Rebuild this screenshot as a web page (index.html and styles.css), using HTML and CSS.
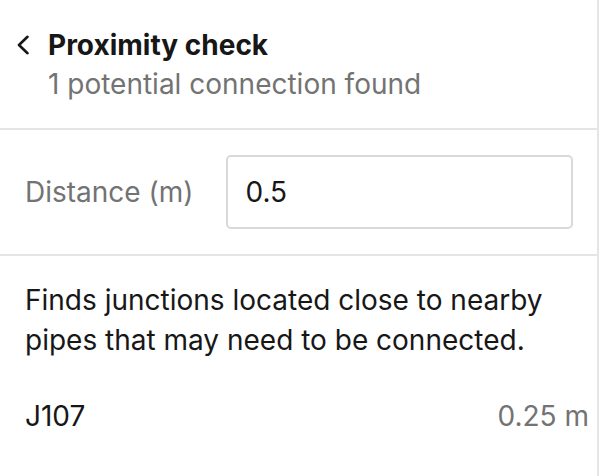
FILE: index.html
```html
<!DOCTYPE html>
<html>
<head>
<meta charset="utf-8">
<link rel="stylesheet" href="styles.css">
</head>
<body>
<div class="panel">
  <header class="header">
    <div class="title-row">
      <button class="back" aria-label="Back">
        <svg width="14" height="20" viewBox="0 0 14 20"><path d="M11.5 1.8 L3 10 L11.5 18.2" fill="none" stroke="#171717" stroke-width="2.6" stroke-linecap="round" stroke-linejoin="round"/></svg>
      </button>
      <h1 class="title">Proximity check</h1>
    </div>
    <p class="subtitle">1 potential connection found</p>
  </header>
  <section class="field-row">
    <label class="field-label" for="dist">Distance (m)</label>
    <input class="field-input" id="dist" type="text" value="0.5">
  </section>
  <section class="body">
    <p class="desc">Finds junctions located close to nearby pipes that may need to be connected.</p>
    <div class="result">
      <span class="result-id">J107</span>
      <span class="result-val">0.25 m</span>
    </div>
  </section>
</div>
</body>
</html>
```

FILE: styles.css
```css
* { box-sizing: border-box; }
html, body { margin: 0; padding: 0; background: #fff; }
body {
  font-family: Inter, "Noto Sans", sans-serif;
  font-size: 28px;
  color: #171717;
}
.panel {
  width: 599px;
  height: 476px;
  border-right: 2px solid #e5e5e5;
  overflow: hidden;
}
.header {
  padding: 26px 24px 24px 16px;
  border-bottom: 2px solid #e5e5e5;
}
.title-row {
  display: flex;
  align-items: center;
  gap: 18px;
}
.back {
  display: flex;
  align-items: center;
  justify-content: center;
  width: 14px;
  height: 38px;
  padding: 0;
  border: 0;
  background: none;
}
.title {
  margin: 0;
  font-size: 28px;
  font-weight: 700;
  line-height: 38px;
  color: #171717;
}
.subtitle {
  margin: 0 0 0 32px;
  font-size: 28px;
  line-height: 40px;
  color: #737373;
}
.field-row {
  display: flex;
  align-items: center;
  gap: 33px;
  padding: 25px 24px 25px 25px;
  border-bottom: 2px solid #e5e5e5;
}
.field-label {
  color: #737373;
  font-size: 28px;
  line-height: 36px;
  white-space: nowrap;
}
.field-input {
  flex: 1;
  width: 0;
  min-width: 0;
  height: 74px;
  padding: 0 17px;
  border: 2px solid #d9d9d9;
  border-radius: 5px;
  font-family: inherit;
  font-size: 28px;
  color: #171717;
  background: #fff;
  outline: none;
}
.body {
  padding: 24px 24px 0 25px;
}
.desc {
  margin: 0;
  line-height: 40px;
  color: #171717;
}
.result {
  display: flex;
  justify-content: space-between;
  margin-top: 36px;
  line-height: 40px;
}
.result-val { color: #737373; margin-right: -16px; }
```
